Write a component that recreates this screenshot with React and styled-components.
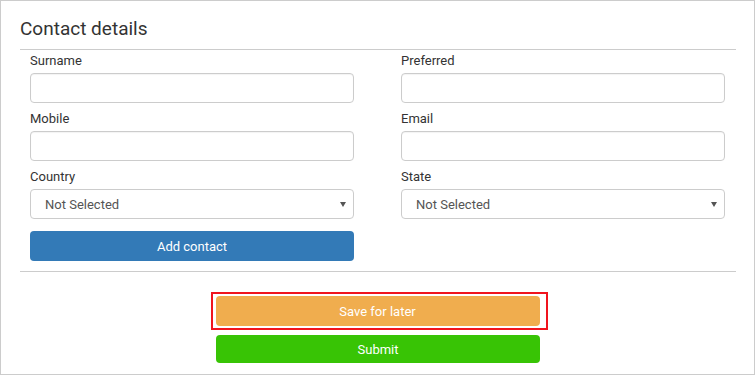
import React from 'react';
import styled, { createGlobalStyle } from 'styled-components';

const GlobalStyle = createGlobalStyle`
  body {
    margin: 0;
    background: #fff;
    font-family: Roboto, 'Liberation Sans', sans-serif;
    color: #333;
  }
`;

const Panel = styled.div`
  box-sizing: border-box;
  width: 755px;
  height: 375px;
  border: 1px solid #ccc;
  padding: 0 18px 0 19px;
`;

const Title = styled.h2`
  margin: 0;
  padding: 16px 0 8px;
  font-size: 19px;
  line-height: 24px;
  font-weight: 400;
  color: #333;
`;

const Rule = styled.hr`
  margin: 0;
  border: 0;
  border-top: 1px solid #ccc;
`;

const Form = styled.div`
  display: grid;
  grid-template-columns: 324px 324px;
  column-gap: 47px;
  row-gap: 7px;
  padding: 2px 0 10px 10px;
`;

const Field = styled.div`
  display: flex;
  flex-direction: column;
`;

const Label = styled.label`
  font-size: 13px;
  line-height: 18px;
  margin-bottom: 3px;
  color: #333;
`;

const Input = styled.input`
  box-sizing: border-box;
  height: 30px;
  width: 100%;
  border: 1px solid #ccc;
  border-radius: 4px;
  padding: 0 12px;
  font: inherit;
  font-size: 13px;
  box-shadow: inset 0 1px 1px rgba(0, 0, 0, 0.05);
`;

const SelectBox = styled.div`
  position: relative;

  &::after {
    content: '';
    position: absolute;
    right: 8px;
    top: 13px;
    border-left: 3px solid transparent;
    border-right: 3px solid transparent;
    border-top: 5px solid #555;
  }
`;

const Select = styled.select`
  box-sizing: border-box;
  appearance: none;
  height: 30px;
  width: 100%;
  border: 1px solid #ccc;
  border-radius: 4px;
  padding: 0 12px 0 14px;
  background: #fff;
  font-family: Roboto, 'Liberation Sans', sans-serif;
  font-size: 13px;
  color: #555;
`;

const Button = styled.button`
  box-sizing: border-box;
  display: block;
  width: ${(p) => p.$width || '100%'};
  height: ${(p) => p.$height || 30}px;
  border: 0;
  border-radius: 4px;
  background: ${(p) => p.$bg};
  color: #fff;
  font-family: Roboto, 'Liberation Sans', sans-serif;
  font-size: 13px;
  cursor: pointer;
`;

const AddRow = styled.div`
  margin-top: 5px;
`;

const Actions = styled.div`
  display: flex;
  flex-direction: column;
  align-items: center;
  padding-top: 20px;
`;

const Highlight = styled.div`
  border: 2px solid #f0141e;
  padding: 2px 6px 2px 3px;
  margin-left: 2px;
`;

const SubmitWrap = styled.div`
  margin-top: 5px;
  width: 324px;
`;

const fields = [
  ['Surname', 'Preferred'],
  ['Mobile', 'Email'],
];

export default function App() {
  return (
    <>
      <GlobalStyle />
      <Panel>
        <Title>Contact details</Title>
        <Rule />
        <Form>
          {fields.flat().map((name) => (
            <Field key={name}>
              <Label>{name}</Label>
              <Input type="text" />
            </Field>
          ))}
          {['Country', 'State'].map((name) => (
            <Field key={name}>
              <Label>{name}</Label>
              <SelectBox>
                <Select defaultValue="">
                  <option value="">Not Selected</option>
                </Select>
              </SelectBox>
            </Field>
          ))}
          <AddRow>
            <Button $bg="#337ab7">Add contact</Button>
          </AddRow>
        </Form>
        <Rule />
        <Actions>
          <Highlight>
            <Button $bg="#f0ad4e" $width="324px">Save for later</Button>
          </Highlight>
          <SubmitWrap>
            <Button $bg="#38c405" $height={28}>Submit</Button>
          </SubmitWrap>
        </Actions>
      </Panel>
    </>
  );
}
